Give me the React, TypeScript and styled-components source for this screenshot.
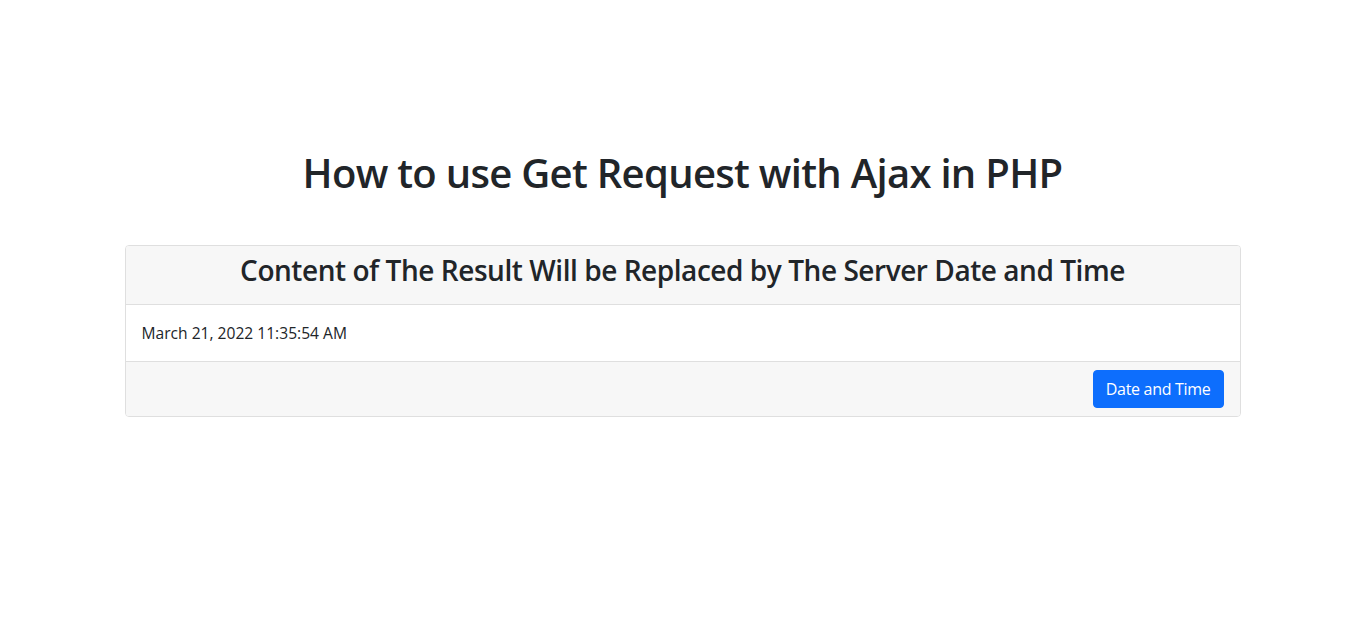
import React from "react";
import styled, { createGlobalStyle } from "styled-components";

const Global = createGlobalStyle`
  *, *::before, *::after { box-sizing: border-box; }
  body {
    margin: 0;
    font-family: "Open Sans", "Noto Sans", sans-serif;
    font-size: 16px;
    line-height: 1.5;
    color: #212529;
    background: #fff;
  }
`;

const Container = styled.div`
  max-width: 1140px;
  margin: 0 auto;
  padding: 149px 11px 0 13px;
`;

const Title = styled.h1`
  margin: 0 0 48px;
  font-size: 40px;
  font-weight: 600;
  line-height: 48px;
  text-align: center;
  letter-spacing: -0.7px;
`;

const Card = styled.div`
  border: 1px solid #dfdfdf;
  border-radius: 4px;
  overflow: hidden;
`;

const CardHeader = styled.div`
  background: #f7f7f7;
  border-bottom: 1px solid #dfdfdf;
  padding: 8px 16px;
`;

const HeaderTitle = styled.h3`
  margin: 0 0 8px;
  font-size: 28px;
  font-weight: 600;
  line-height: 33.6px;
  text-align: center;
  letter-spacing: -0.45px;
`;

const CardBody = styled.div`
  padding: 16px;
  font-size: 15.6px;
  line-height: 24px;
`;

const CardFooter = styled.div`
  background: #f7f7f7;
  border-top: 1px solid #dfdfdf;
  padding: 8px 16px;
  display: flex;
  justify-content: flex-end;
`;

const Button = styled.button`
  font-family: inherit;
  font-size: 16px;
  line-height: 24px;
  padding: 6px 12px;
  color: #fff;
  background: #0d6efd;
  border: 1px solid #0d6efd;
  border-radius: 4px;
  cursor: pointer;
  letter-spacing: -0.3px;
`;

export default function App() {
  return (
    <>
      <Global />
      <Container>
        <Title>How to use Get Request with Ajax in PHP</Title>
        <Card>
          <CardHeader>
            <HeaderTitle>
              Content of The Result Will be Replaced by The Server Date and Time
            </HeaderTitle>
          </CardHeader>
          <CardBody>March 21, 2022 11:35:54 AM</CardBody>
          <CardFooter>
            <Button type="button">Date and Time</Button>
          </CardFooter>
        </Card>
      </Container>
    </>
  );
}
